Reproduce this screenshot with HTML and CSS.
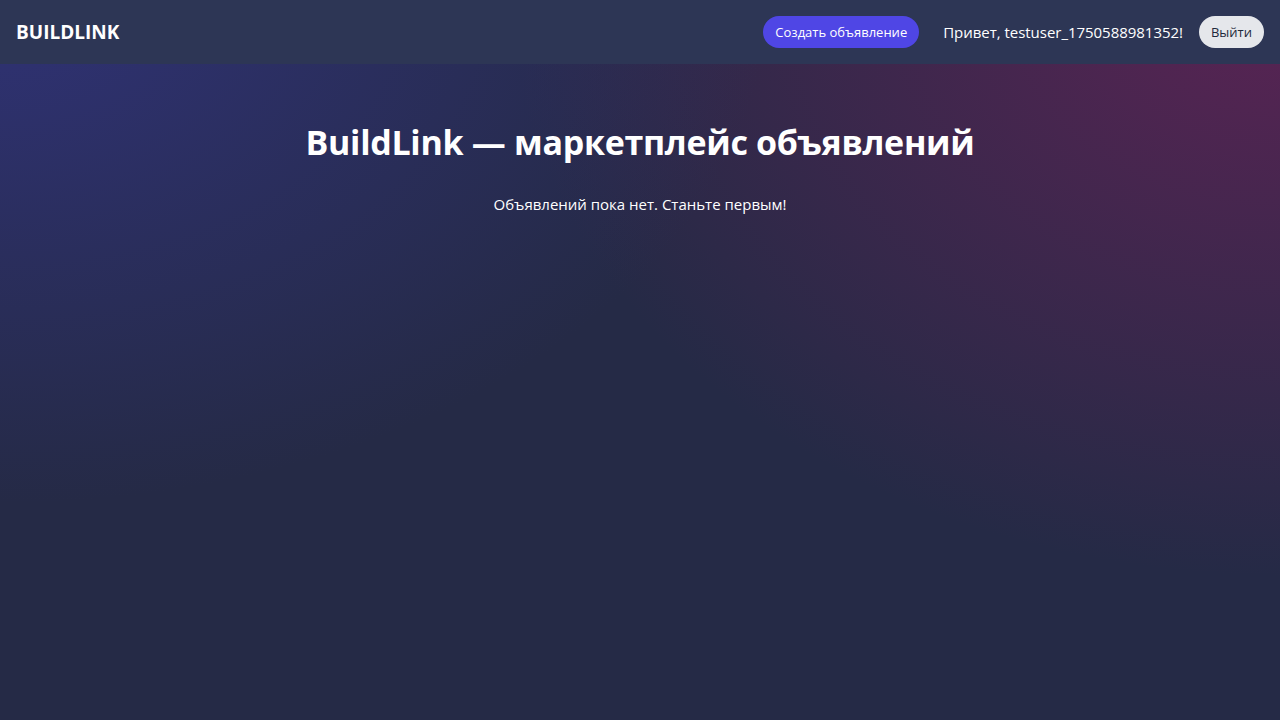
FILE: index.html
```html
<!DOCTYPE html>
<html lang="ru">
<head>
<meta charset="utf-8">
<title>BuildLink</title>
<link rel="stylesheet" href="styles.css">
</head>
<body>
<header class="topbar">
  <div class="logo">BUILDLINK</div>
  <nav class="actions">
    <button class="btn btn-primary">Создать объявление</button>
    <span class="greeting">Привет, testuser_1750588981352!</span>
    <button class="btn btn-light">Выйти</button>
  </nav>
</header>
<main class="content">
  <h1 class="title">BuildLink — маркетплейс объявлений</h1>
  <p class="empty">Объявлений пока нет. Станьте первым!</p>
</main>
</body>
</html>
```
FILE: styles.css
```css
* { box-sizing: border-box; }
html, body { height: 100%; }
body {
  margin: 0;
  font-family: "Open Sans", "Noto Sans", sans-serif;
  color: #fff;
  background-color: #252a46;
  background-image:
    radial-gradient(ellipse 60% 70% at 0% 0%, rgba(50, 52, 128, 0.8), rgba(50, 52, 128, 0) 100%),
    radial-gradient(ellipse 60% 80% at 100% 0%, rgba(95, 35, 85, 0.9), rgba(95, 35, 85, 0) 100%);
  min-height: 100vh;
}
.topbar {
  height: 64px;
  background: #2d3655;
  display: flex;
  align-items: center;
  justify-content: space-between;
  padding: 0 16px;
}
.logo {
  font-size: 19px;
  font-weight: 700;
}
.actions {
  display: flex;
  align-items: center;
  gap: 24px;
}
.btn {
  font-family: inherit;
  font-size: 13px;
  height: 32px;
  padding: 0 12px;
  border: none;
  border-radius: 16px;
}
.btn-primary { background: #4f46e5; color: #fff; }
.btn-light { background: #e5e7eb; color: #1e293b; margin-left: -8px; }
.greeting { font-size: 15px; letter-spacing: -0.03px; }
.content {
  text-align: center;
  padding-top: 56px;
}
.title {
  margin: 0;
  font-size: 34px;
  font-weight: 700;
  line-height: 44px;
  letter-spacing: -0.3px;
}
.empty {
  margin: 28px 0 0;
  font-size: 15px;
  line-height: 24px;
}
```
